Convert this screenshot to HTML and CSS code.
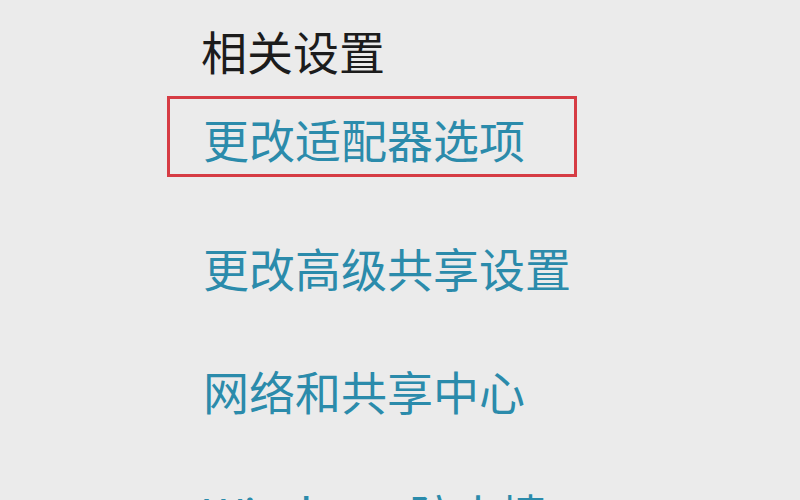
FILE: index.html
```html
<!DOCTYPE html>
<html lang="zh-CN">
<head>
    <meta charset="UTF-8">
    <meta name="viewport" content="width=device-width, initial-scale=1.0">
    <title>相关设置</title>
    <link rel="stylesheet" href="styles.css">
</head>
<body>
    <div class="settings">
        <h2 class="title">相关设置</h2>
        <ul class="links">
            <li><a class="link selected" href="#">更改适配器选项</a></li>
            <li><a class="link" href="#">更改高级共享设置</a></li>
            <li><a class="link" href="#">网络和共享中心</a></li>
            <li><a class="link" href="#">Windows 防火墙</a></li>
        </ul>
    </div>
</body>
</html>
```

FILE: styles.css
```css
body {
    margin: 0;
    height: 100vh;
    overflow: hidden;
    background-color: #ebebeb;
    font-family: "Noto Sans CJK SC", "Noto Sans", sans-serif;
}
.settings {
    padding: 27px 0 0 167px;
}
.title {
    margin: 0 0 23px 34px;
    font-size: 46px;
    line-height: 46px;
    font-weight: 400;
    color: #1c1c1c;
}
.links {
    list-style: none;
    margin: 0;
    padding: 0;
    display: flex;
    flex-direction: column;
    gap: 42px;
}
.link {
    display: inline-block;
    padding: 16px 49px 13px 33px;
    border: 3px solid transparent;
    font-size: 46px;
    line-height: 46px;
    color: #2b8bab;
    text-decoration: none;
}
.selected {
    width: 322px;
    border-color: #d63c44;
    margin-bottom: 6px;
}
```
